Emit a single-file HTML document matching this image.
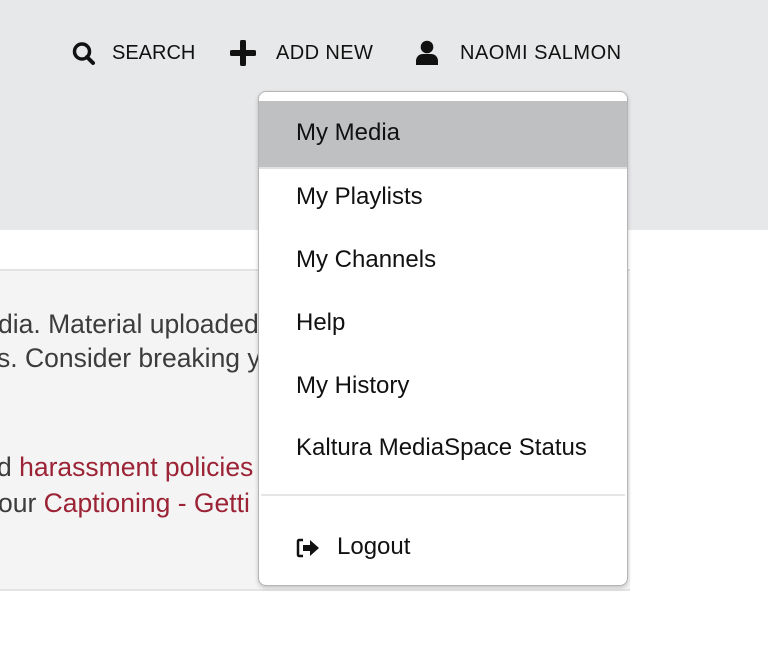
<!DOCTYPE html>
<html><head><meta charset="utf-8"><style>
*{margin:0;padding:0;box-sizing:border-box}
body{width:768px;height:666px;overflow:hidden;background:#fff;font-family:"Liberation Sans",sans-serif;position:relative}
.hdr{position:absolute;left:0;top:0;width:768px;height:230px;background:#e7e8e9}
.nav{position:absolute;top:40px;font-size:20px;color:#111;white-space:nowrap;line-height:26px}
.panel{position:absolute;left:-10px;top:269px;width:640px;height:322px;background:#f4f4f4;border-top:2px solid #e2e2e2;border-bottom:2px solid #e4e4e4}
.t{position:absolute;left:0;font-size:26.5px;color:#3c3c3c;white-space:nowrap;line-height:30px}
.r{color:#9b2335}
.dd{position:absolute;left:258px;top:91px;width:370px;height:495px;background:#fff;border:1px solid #b5b5b5;border-radius:8px;box-shadow:0 2px 4px rgba(0,0,0,.2);overflow:hidden}
.it{position:absolute;left:37px;font-size:24px;color:#111;white-space:nowrap;line-height:28px}
</style></head><body>
<div class="hdr"></div>
<svg style="position:absolute;left:70px;top:40px" width="28" height="28" viewBox="0 0 28 28"><circle cx="12" cy="11.5" r="7.5" fill="none" stroke="#111" stroke-width="3.5"/><path d="M17 17l6 6" stroke="#111" stroke-width="4" stroke-linecap="round"/></svg>
<div class="nav" style="left:112px">SEARCH</div>
<svg style="position:absolute;left:230px;top:40px" width="26" height="26" viewBox="0 0 26 26"><path d="M13 2v22M2 13h22" stroke="#111" stroke-width="6" stroke-linecap="round"/></svg>
<div class="nav" style="left:276px;letter-spacing:0.4px">ADD NEW</div>
<svg style="position:absolute;left:414px;top:39px" width="26" height="28" viewBox="0 0 26 28"><circle cx="13" cy="8" r="6.3" fill="#111"/><path d="M2 26v-4c0-4 3-7 7-7h8c4 0 7 3 7 7v4z" fill="#111"/></svg>
<div class="nav" style="left:460px;letter-spacing:0.5px">NAOMI SALMON</div>

<div class="panel"></div>
<div class="t" style="top:309px;left:-2px">dia. Material uploaded</div>
<div class="t" style="top:343px;left:-3px">s. Consider breaking y</div>
<div class="t" style="top:452px;left:-3px">d <span class="r">harassment policies</span></div>
<div class="t" style="top:488px;left:-2px">our <span class="r">Captioning - Getti</span></div>

<div class="dd">
<div style="position:absolute;left:0;top:9px;width:370px;height:68px;background:#bfc0c2;border-bottom:2px solid #e0e0e0"></div>
<div class="it" style="top:27px">My Media</div>
<div class="it" style="top:91px">My Playlists</div>
<div class="it" style="top:154px">My Channels</div>
<div class="it" style="top:217px">Help</div>
<div class="it" style="top:280px">My History</div>
<div class="it" style="top:342px">Kaltura MediaSpace Status</div>
<div style="position:absolute;left:2px;right:2px;top:402px;height:2px;background:#e6e6e6"></div>
<svg style="position:absolute;left:36px;top:445px" width="26" height="22" viewBox="0 0 26 22"><path d="M8 3H4.5Q3 3 3 4.5v13Q3 19 4.5 19H8" fill="none" stroke="#111" stroke-width="2.5"/><path d="M8 8h7V3l9 8-9 8v-5H8z" fill="#111"/></svg>
<div class="it" style="top:441px;left:78px">Logout</div>
</div>
</body></html>
